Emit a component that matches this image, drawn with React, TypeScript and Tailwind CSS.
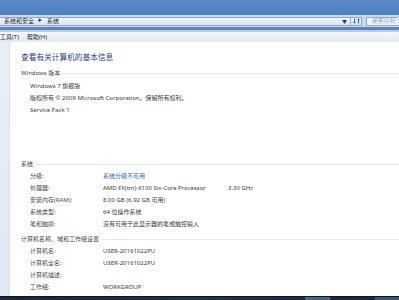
import React from 'react';

const Row = ({ label, value, extra, link }: { label: string; value?: string; extra?: string; link?: boolean }) => (
  <div className="flex h-[12px] items-center pl-[9px]">
    <span className="w-[73px] shrink-0 text-[#4a4a4a]">{label}</span>
    {value && <span className={link ? 'w-[125px] shrink-0 text-[#2a66c0]' : 'w-[125px] shrink-0 whitespace-nowrap text-[#3a3a3a]'}>{value}</span>}
    {extra && <span className="text-[#3a3a3a]">{extra}</span>}
  </div>
);

const SectionHead = ({ title, className }: { title: string; className?: string }) => (
  <div className={'flex h-[12px] items-center gap-[3px] ' + (className ?? '')}>
    <span className="whitespace-nowrap text-[#444]">{title}</span>
    <div className="h-px flex-1 bg-[#e6e8eb]" />
  </div>
);

export default function App() {
  return (
    <div className="flex h-[300px] w-[399px] flex-col overflow-hidden bg-white font-['Noto_Sans','Noto_Sans_CJK_SC',sans-serif] text-[6px] leading-none">
      {/* title bar */}
      <div className="h-[15px] shrink-0 bg-gradient-to-b from-[#5a8bc7] to-[#4d7fbf]" />

      {/* address bar */}
      <div className="flex h-[12px] shrink-0 items-center bg-[#c9d9ed] pr-px">
        <div className="flex h-[9px] flex-1 items-center border border-l-0 border-[#8fa9ca] bg-gradient-to-b from-[#eef3fa] to-[#dbe6f3] pl-[4px] pr-[3px] text-[#2a2a2a]">
          <span>系统和安全</span>
          <span className="ml-[4px] text-[4px] text-[#333]">▶</span>
          <span className="ml-[5px]">系统</span>
          <span className="ml-auto text-[5px] text-[#333]">▼</span>
        </div>
        <div className="flex h-[9px] w-[11px] items-center justify-center border-y border-r border-[#8fa9ca] bg-gradient-to-b from-[#eef3fa] to-[#dbe6f3]">
          <svg width="7" height="6" viewBox="0 0 7 6" fill="none" stroke="#2f6fc0" strokeWidth="1">
            <path d="M1.5 0.5v4.5M0.3 3.8l1.2 1.4 1.2-1.4" />
            <path d="M5.5 5.5v-4.5M4.3 2.2l1.2-1.4 1.2 1.4" />
          </svg>
        </div>
        <div className="ml-[4px] flex h-[9px] w-[32px] items-center overflow-hidden border border-r-0 border-[#8fa9ca] bg-[#f1f5fb] pl-[4px] italic text-[#9aa5b3]">
          <span className="whitespace-nowrap">搜索控制</span>
        </div>
      </div>
      <div className="h-[3px] shrink-0 bg-[#5b83b8]" />
      <div className="h-[2px] shrink-0 bg-[#b9cbe3]" />

      {/* menu bar */}
      <div className="flex h-[10px] shrink-0 items-center gap-[8px] bg-gradient-to-b from-[#f4f6fb] to-[#e4e9f5] text-[#2a2a2a]">
        <span>工具(T)</span>
        <span>帮助(H)</span>
      </div>

      {/* body */}
      <div className="flex min-h-0 flex-1">
        <aside className="w-[10px] shrink-0 border-r border-[#d7dfe9] bg-gradient-to-b from-[#e9eff7] to-[#dfe8f3]" />
        <main className="flex-1 pl-[11px] pt-[10px]">
          <div className="h-[10px] text-[7.7px] leading-[10px] text-[#1e3d8f]">查看有关计算机的基本信息</div>

          <SectionHead title="Windows 版本" className="mt-[5px]" />
          <div className="mt-px text-[#3a3a3a]">
            <div className="flex h-[12px] items-center pl-[9px]">Windows 7 旗舰版</div>
            <div className="flex h-[12px] items-center pl-[9px]">版权所有 © 2009 Microsoft Corporation。保留所有权利。</div>
            <div className="flex h-[12px] items-center pl-[9px]">Service Pack 1</div>
          </div>

          <SectionHead title="系统" className="mt-[42px]" />
          <Row label="分级:" value="系统分级不可用" link />
          <Row label="处理器:" value="AMD FX(tm)-6100 Six-Core Processor" extra="3.30 GHz" />
          <Row label="安装内存(RAM):" value="8.00 GB (6.92 GB 可用)" />
          <Row label="系统类型:" value="64 位操作系统" />
          <Row label="笔和触摸:" value="没有可用于此显示器的笔或触控输入" />

          <SectionHead title="计算机名称、域和工作组设置" className="mt-[3px]" />
          <Row label="计算机名:" value="USER-20161022PU" />
          <Row label="计算机全名:" value="USER-20161022PU" />
          <Row label="计算机描述:" />
          <Row label="工作组:" value="WORKGROUP" />
        </main>
      </div>

      {/* taskbar */}
      <div className="relative h-[4px] shrink-0 border-t border-[#0d1420] bg-gradient-to-r from-[#1b2636] via-[#243246] to-[#1b2636]">
        <div className="absolute left-[305px] top-0 h-full w-[25px] bg-[#5a7ea8]/70" />
        <div className="absolute left-[375px] top-0 h-full w-[24px] bg-[#4f73a0]/60" />
      </div>
    </div>
  );
}
